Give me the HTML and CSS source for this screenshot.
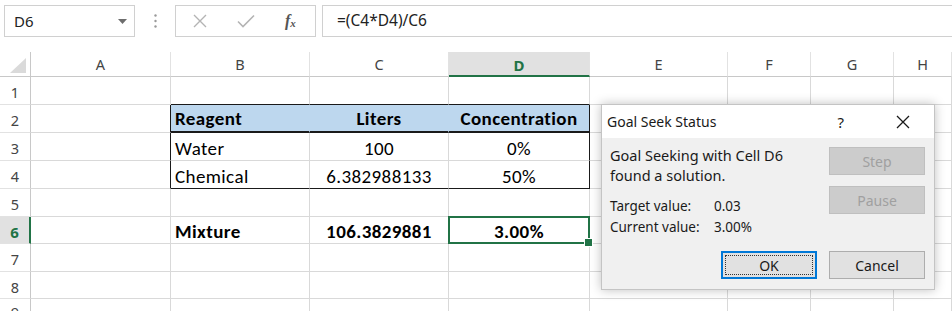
FILE: index.html
```html
<!DOCTYPE html>
<html>
<head>
<meta charset="utf-8">
<link rel="stylesheet" href="styles.css">
</head>
<body>
<div class="app">
  <div class="fbar">
    <div class="namebox">
      <span class="nb-text">D6</span>
      <svg class="nb-arrow" width="9" height="5" viewBox="0 0 9 5"><path d="M0 0h9L4.5 5z" fill="#6d6d6d"/></svg>
    </div>
    <div class="fb-dots">
      <svg width="3" height="14" viewBox="0 0 3 14"><circle cx="1.5" cy="1.5" r="1.2" fill="#9a9a9a"/><circle cx="1.5" cy="7" r="1.2" fill="#9a9a9a"/><circle cx="1.5" cy="12.5" r="1.2" fill="#9a9a9a"/></svg>
    </div>
    <div class="fb-btns">
      <svg class="fb-x" width="14" height="14" viewBox="0 0 14 14"><path d="M1 1L13 13M13 1L1 13" stroke="#b4b4b4" stroke-width="1.4" fill="none"/></svg>
      <svg class="fb-ok" width="18" height="14" viewBox="0 0 18 14"><path d="M1 7.5L6 12.5L17 1.5" stroke="#b4b4b4" stroke-width="1.6" fill="none"/></svg>
      <span class="fb-fx">f<sub>x</sub></span>
    </div>
    <div class="finput">=(C4*D4)/C6</div>
  </div>

  <div class="sheet">
    <!-- header row -->
    <div class="c hd corner"><span class="tri"></span></div>
    <div class="c hd">A</div>
    <div class="c hd">B</div>
    <div class="c hd">C</div>
    <div class="c hd hsel">D</div>
    <div class="c hd">E</div>
    <div class="c hd">F</div>
    <div class="c hd">G</div>
    <div class="c hd">H</div>
    <!-- row 1 -->
    <div class="c rh">1</div>
    <div class="c"></div>
    <div class="c bb"></div>
    <div class="c bb"></div>
    <div class="c bb"></div>
    <div class="c"></div>
    <div class="c"></div>
    <div class="c"></div>
    <div class="c"></div>
    <!-- row 2 -->
    <div class="c rh">2</div>
    <div class="c br"></div>
    <div class="c th left">Reagent</div>
    <div class="c th">Liters</div>
    <div class="c th br">Concentration</div>
    <div class="c"></div>
    <div class="c"></div>
    <div class="c"></div>
    <div class="c"></div>
    <!-- row 3 -->
    <div class="c rh">3</div>
    <div class="c br"></div>
    <div class="c left">Water</div>
    <div class="c">100</div>
    <div class="c br">0%</div>
    <div class="c"></div>
    <div class="c"></div>
    <div class="c"></div>
    <div class="c"></div>
    <!-- row 4 -->
    <div class="c rh">4</div>
    <div class="c br"></div>
    <div class="c left bb">Chemical</div>
    <div class="c bb">6.382988133</div>
    <div class="c br bb">50%</div>
    <div class="c"></div>
    <div class="c"></div>
    <div class="c"></div>
    <div class="c"></div>
    <!-- row 5 -->
    <div class="c rh">5</div>
    <div class="c"></div>
    <div class="c"></div>
    <div class="c"></div>
    <div class="c"></div>
    <div class="c"></div>
    <div class="c"></div>
    <div class="c"></div>
    <div class="c"></div>
    <!-- row 6 -->
    <div class="c rh rsel">6</div>
    <div class="c"></div>
    <div class="c left b">Mixture</div>
    <div class="c b">106.3829881</div>
    <div class="c b active">3.00%</div>
    <div class="c"></div>
    <div class="c"></div>
    <div class="c"></div>
    <div class="c"></div>
    <!-- row 7 -->
    <div class="c rh">7</div>
    <div class="c"></div>
    <div class="c"></div>
    <div class="c"></div>
    <div class="c"></div>
    <div class="c"></div>
    <div class="c"></div>
    <div class="c"></div>
    <div class="c"></div>
    <!-- row 8 -->
    <div class="c rh">8</div>
    <div class="c"></div>
    <div class="c"></div>
    <div class="c"></div>
    <div class="c"></div>
    <div class="c"></div>
    <div class="c"></div>
    <div class="c"></div>
    <div class="c"></div>
    <!-- row 9 -->
    <div class="c rh r9">9</div>
    <div class="c"></div>
    <div class="c"></div>
    <div class="c"></div>
    <div class="c"></div>
    <div class="c"></div>
    <div class="c"></div>
    <div class="c"></div>
    <div class="c"></div>
  </div>

  <div class="dialog">
    <div class="dlg-title">
      <span class="dlg-name">Goal Seek Status</span>
      <span class="dlg-help">?</span>
      <svg class="dlg-close" width="14" height="14" viewBox="0 0 14 14"><path d="M1 1L13 13M13 1L1 13" stroke="#1a1a1a" stroke-width="1.3" fill="none"/></svg>
    </div>
    <div class="dlg-body">
      <div class="dlg-main">
        <div class="dlg-msg">Goal Seeking with Cell D6<br>found a solution.</div>
        <div class="dlg-vals">
          <span>Target value:</span><span>0.03</span>
          <span>Current value:</span><span>3.00%</span>
        </div>
      </div>
      <div class="dlg-side">
        <div class="btn dis">Step</div>
        <div class="btn dis">Pause</div>
      </div>
    </div>
    <div class="dlg-foot">
      <div class="btn ok"><span class="focus">OK</span></div>
      <div class="btn">Cancel</div>
    </div>
  </div>
</div>
</body>
</html>
```

FILE: styles.css
```css
* { box-sizing: border-box; }
html, body { margin: 0; padding: 0; background: #fff; }
body { width: 952px; height: 311px; overflow: hidden; }
.app { position: relative; width: 952px; height: 311px; overflow: hidden; font-family: "Noto Sans", "Open Sans", sans-serif; }

/* formula bar */
.fbar { display: flex; height: 52px; padding: 5px 0 0 4px; align-items: flex-start; }
.namebox { width: 131px; height: 32px; border: 1px solid #d0d0d0; display: flex; align-items: center; padding: 0 0 0 9px; }
.nb-text { font-size: 15px; color: #222; flex: 1; }
.nb-arrow { margin-right: 7px; }
.fb-dots { width: 40px; height: 32px; display: flex; align-items: center; justify-content: center; }
.fb-btns { width: 141px; height: 32px; border: 1px solid #d0d0d0; display: flex; align-items: center; padding-left: 17px; }
.fb-x { margin-right: 30px; }
.fb-ok { margin-right: 30px; }
.fb-fx { font-family: "Liberation Serif", serif; font-style: italic; font-size: 16px; color: #555; font-weight: bold; }
.fb-fx sub { font-size: 11px; vertical-align: -1px; }
.finput { flex: 1; height: 32px; margin-left: 6px; border: 1px solid #d0d0d0; border-right: 0; padding-left: 14px; font-size: 15.5px; line-height: 29px; color: #222; }

/* sheet */
.sheet {
  display: grid;
  grid-template-columns: 31px 140px 139px 139px 141px 138px 83px 83px 1fr;
  grid-template-rows: 25px 28px 28px 28px 28px 28px 27px 28px 27px 28px;
  font-family: "Carlito", "Lato", sans-serif;
  font-size: 19px;
  letter-spacing: 0.4px;
  color: #000;
}
.c { border-right: 1px solid #d9d9d9; border-bottom: 1px solid #d9d9d9; display: flex; align-items: flex-end; justify-content: center; white-space: nowrap; position: relative; padding-bottom: 0; line-height: 22px; }
.left { justify-content: flex-start; padding-left: 4px; }
.b { font-weight: bold; }
.hd { font-family: "Noto Sans", sans-serif; font-size: 14.5px; letter-spacing: 0; color: #444; border-bottom-color: #c8c8c8; border-right-color: #e2e2e2; align-items: center; padding-bottom: 0; }
.corner { border-right-color: #c8c8c8; justify-content: flex-end; align-items: flex-end; padding: 0 4px 3px 0; }
.tri { width: 0; height: 0; border-left: 16px solid transparent; border-bottom: 15px solid #dadada; }
.hsel { background: #e1e1e1; color: #217346; font-weight: bold; border-bottom: 2px solid #217346; font-size: 15px; padding-top: 2px; }
.rh { font-family: "Noto Sans", sans-serif; font-size: 14.5px; letter-spacing: 0; color: #444; justify-content: center; align-items: center; padding: 3px 0 0 0; border-right-color: #c8c8c8; border-bottom-color: #e2e2e2; }
.rsel { background: #e1e1e1; color: #217346; font-weight: bold; border-right: 2px solid #217346; font-size: 15px; }
.r9 { align-items: flex-start; padding-top: 2px; }
.bb { border-bottom-color: #1a1a1a; }
.br { border-right-color: #1a1a1a; }
.th { background: #bdd7ee; font-weight: bold; border-bottom: 2px solid #1a1a1a; border-right-color: #bdd7ee; padding-bottom: 1px; }
.th.br { border-right-color: #1a1a1a; }
.active::after { content: ""; position: absolute; left: -1px; top: -1px; right: -1px; bottom: -1px; border: 2px solid #217346; }
.active::before { content: ""; position: absolute; right: -4px; bottom: -4px; width: 7px; height: 7px; background: #217346; border: 1px solid #fff; z-index: 1; }

/* dialog */
.dialog { position: absolute; left: 601px; top: 104px; width: 334px; height: 186px; background: #f0f0f0; border: 1px solid #c4c4c4; box-shadow: 0 0 10px rgba(0,0,0,0.25); font-family: "Noto Sans", sans-serif; font-size: 14.5px; color: #1a1a1a; display: flex; flex-direction: column; }
.dlg-title { height: 33px; background: #fff; display: flex; align-items: center; padding-left: 5px; }
.dlg-name { flex: 1; font-size: 14px; }
.dlg-help { font-size: 15px; margin-right: 52px; }
.dlg-close { margin-right: 24px; }
.dlg-body { display: flex; padding: 9px 9px 0 8px; }
.dlg-main { flex: 1; }
.dlg-msg { line-height: 20px; margin-top: -2px; }
.dlg-vals { display: grid; grid-template-columns: 104px auto; row-gap: 2px; margin-top: 12px; line-height: 19px; font-size: 13.5px; }
.dlg-side { display: flex; flex-direction: column; gap: 11px; }
.btn { width: 96px; height: 28px; border: 1px solid #adadad; background: #e1e1e1; display: flex; align-items: center; justify-content: center; font-size: 14px; }
.btn.dis { background: #cccccc; border-color: #bfbfbf; color: #a0a0a0; }
.dlg-foot { display: flex; justify-content: flex-end; gap: 12px; padding: 0 9px 0 0; margin-top: auto; margin-bottom: 10px; }
.btn.ok { border: 2px solid #0078d7; padding: 2px; }
.focus { flex: 1; align-self: stretch; display: flex; align-items: center; justify-content: center; border: 1px dotted #333; }
```
